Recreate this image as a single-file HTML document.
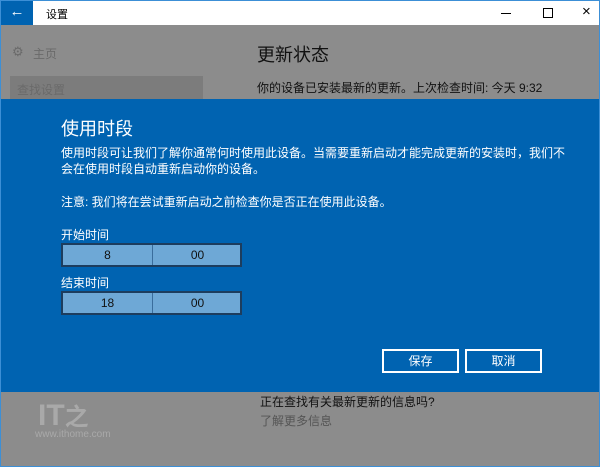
<!DOCTYPE html>
<html><head><meta charset="utf-8"><style>
*{margin:0;padding:0;box-sizing:border-box}
body{width:600px;height:467px;overflow:hidden;position:relative;background:#8c8c8c;font-family:"Liberation Sans","Noto Sans CJK SC",sans-serif;border:1px solid #3c8fd6}
.a{position:absolute;white-space:nowrap}
#tb{left:0;top:0;width:598px;height:24px;background:#fff}
#back{left:0;top:0;width:32px;height:24px;background:#0063b1;color:#fff;font-size:15px;text-align:center;line-height:22px}
#dlg{left:0;top:98px;width:598px;height:293px;background:#0063b1}
.t{color:#fff;font-size:12px}
.pick{position:absolute;left:60px;width:181px;height:24px;background:#6ea8d6;border:2px solid #1d3d5e;font-size:12px;color:#111}
.pick span{position:absolute;top:3px;text-align:center}
.pick i{position:absolute;left:89px;top:0;width:1px;height:20px;background:#3a6d9c}
.btn{position:absolute;top:348px;width:77px;height:24px;border:2px solid #fff;color:#fff;font-size:12px;text-align:center;line-height:20px}
</style></head><body>
<div class="a" id="tb"></div>
<div class="a" id="back">←</div>
<div class="a" style="left:45px;top:5px;font-size:11px;color:#000">设置</div>
<div class="a" style="left:500px;top:12px;width:10px;height:1px;background:#000"></div>
<div class="a" style="left:542px;top:7px;width:10px;height:10px;border:1px solid #000"></div>
<div class="a" style="left:581px;top:2px;font-size:15px">×</div>
<div class="a" style="left:11px;top:43px;font-size:13px;color:#6a6a6a">⚙</div>
<div class="a" style="left:32px;top:44px;font-size:12px;color:#6a6a6a">主页</div>
<div class="a" style="left:9px;top:75px;width:193px;height:25px;background:#7c7c7c"></div>
<div class="a" style="left:16px;top:80px;font-size:12px;color:#6a6a6a">查找设置</div>
<div class="a" style="left:256px;top:40px;font-size:18px;color:#111">更新状态</div>
<div class="a" style="left:256px;top:78px;font-size:12px;color:#111">你的设备已安装最新的更新。上次检查时间: 今天 9:32</div>
<div class="a" id="dlg"></div>
<div class="a t" style="left:60px;top:114px;font-size:18px">使用时段</div>
<div class="a t" style="left:60px;top:144px;line-height:16px">使用时段可让我们了解你通常何时使用此设备。当需要重新启动才能完成更新的安装时，我们不<br>会在使用时段自动重新启动你的设备。</div>
<div class="a t" style="left:60px;top:192px">注意: 我们将在尝试重新启动之前检查你是否正在使用此设备。</div>
<div class="a t" style="left:60px;top:225px">开始时间</div>
<div class="pick" style="top:242px"><span style="left:0;width:89px">8</span><i></i><span style="left:90px;width:89px">00</span></div>
<div class="a t" style="left:60px;top:273px">结束时间</div>
<div class="pick" style="top:290px"><span style="left:0;width:89px">18</span><i></i><span style="left:90px;width:89px">00</span></div>
<div class="btn" style="left:381px">保存</div>
<div class="btn" style="left:464px">取消</div>
<div class="a" style="left:37px;top:396px;font-size:30px;font-weight:bold;color:#a9a9a9">IT<span style="font-size:24px">之</span></div>
<div class="a" style="left:34px;top:428px;font-size:10px;color:#a9a9a9">www.ithome.com</div>
<div class="a" style="left:259px;top:392px;font-size:12px;color:#111">正在查找有关最新更新的信息吗?</div>
<div class="a" style="left:259px;top:411px;font-size:12px;color:#555">了解更多信息</div>
</body></html>
